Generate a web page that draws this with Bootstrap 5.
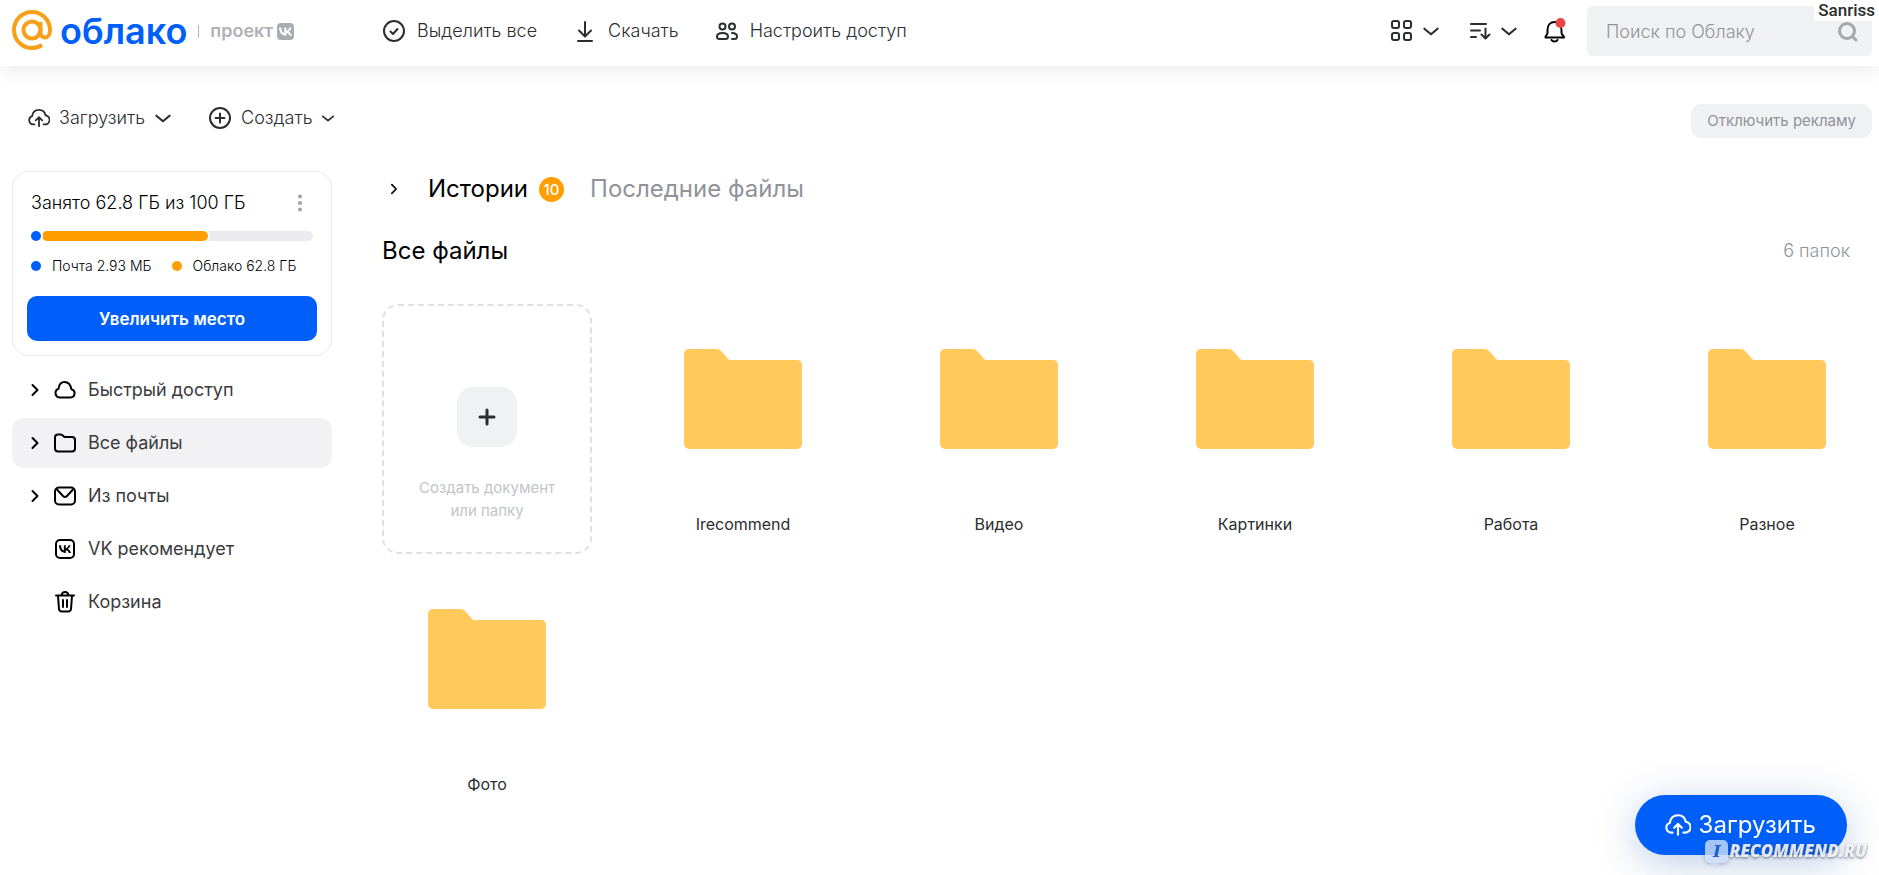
<!DOCTYPE html>
<html lang="ru">
<head>
<meta charset="utf-8">
<meta name="viewport" content="width=device-width, initial-scale=1">
<title>Облако — Все файлы</title>
<link rel="stylesheet" href="https://cdn.jsdelivr.net/npm/bootstrap@5.3.0/dist/css/bootstrap.min.css">
<style>
  :root { --blue: #005ff9; --orange: #ff9e00; --ink: #2c2d2e; --muted: #919399; --soft: #f0f1f3; }
  body { font-family: Inter, "Open Sans", sans-serif; font-size: 18px; line-height: 24px; color: var(--ink); background: #fff; }
  svg { flex: none; display: block; }
  .ico { fill: none; stroke: currentColor; stroke-width: 2; stroke-linecap: round; stroke-linejoin: round; }
  .side-col { width: 382px; flex: none; }

  .topbar { height: 66px; box-shadow: 0 0 20px rgba(0,0,0,.12); padding: 0 7px 4px 0; }
  .wordmark { font-size: 36px; line-height: 40px; font-weight: 600; color: var(--blue); }
  .project { font-weight: 600; color: #b0b2b5; }
  .divider { width: 1px; height: 13px; margin: 0 11px; background: #b0b2b5; }
  .actions { gap: 36px; }
  .tool { background: none; border: 0; padding: 0; gap: 11px; color: inherit; font-weight: 300; display: flex; align-items: center; }
  .view-tools .tool { gap: 8px; }
  .view-tools .bell { margin: 0 18px 0 23px; }
  .search { width: 285px; height: 50px; }
  .search input { background: var(--soft); border: 0; border-radius: 6px; height: 100%; padding: 0 56px 0 19px; font-size: 18px; font-weight: 300; }
  .search input::placeholder { color: var(--muted); opacity: 1; }
  .search-ico { position: absolute; right: 12px; top: 14px; color: #a5a7ab; stroke-width: 3; }
  .user-tag { position: absolute; right: 0; top: 0; padding: 0 4px; background: #fff; font: 500 17px/21px Roboto, sans-serif; z-index: 3; }

  .sub-row { height: 77px; }
  .upload-row { gap: 36px; padding: 0 0 13px 28px; }
  .upload-row .tool { gap: 9px; }
  .ad-row { padding-top: 38px; }
  .ad-btn { background: var(--soft); color: var(--muted); border: 0; border-radius: 10px; height: 34px; font-size: 15px; line-height: 20px; padding: 0 16px; }

  .side-body { padding: 28px 50px 0 12px; }
  .quota { border: 1px solid #e9e9ec; border-radius: 16px; padding: 19px 14px 14px; }
  .quota-text { font-weight: 300; color: #000; }
  .meter { height: 10px; border-radius: 5px; background: #ebebef; }
  .meter span { border-radius: 5px; box-shadow: 0 0 0 2px #fff; }
  .dot { width: 10px; height: 10px; border-radius: 50%; flex: none; }
  .meter .dot { z-index: 1; margin-right: 1px; }
  .legend { margin: 15px 0 20px; gap: 11px; font-size: 14px; line-height: 20px; font-weight: 300; color: #000; }
  .legend .bg-cloud { margin-left: 9px; }
  .bg-mail { background: var(--blue); }
  .bg-cloud { background: var(--orange); }
  .more-btn { background: none; border: 0; color: #a0a2a6; padding: 0 14px; }
  .grow-btn { height: 45px; background: var(--blue); color: #fff; border: 0; border-radius: 10px; font-size: 17px; font-weight: 600; }

  .menu { gap: 3px; padding-top: 9px; }
  .menu-link { height: 50px; border-radius: 12px; padding: 0 16px; gap: 11px; color: #3b3b3d; text-decoration: none; }
  .menu-link.active { background: #f2f2f5; }
  .menu-link svg { color: #000; }
  .no-arrow { padding-left: 41px; }

  .main-col { padding-right: 7px; }
  .heading { font-size: 24px; line-height: 32px; font-weight: 400; }
  .stories { height: 46px; margin-top: 23px; }
  .tab-btn { background: none; border: 0; padding: 0; }
  .story-btn { margin: 0 11px 0 22px; }
  .recent-btn { margin-left: 26px; }
  .count { width: 25px; height: 25px; border-radius: 50%; background: var(--orange); color: #fff; font-size: 15px; line-height: 25px; font-weight: 500; text-align: center; }
  .title-row { height: 78px; margin-bottom: 14px; }
  .gray { color: var(--muted); }
  .total { padding-right: 22px; font-weight: 300; }
  .tiles { display: grid; grid-template-columns: repeat(auto-fill, 210px); justify-content: space-between; column-gap: 40px; row-gap: 10px; }
  .tile { height: 250px; color: var(--ink); text-decoration: none; font-size: 16px; padding-top: 45px; }
  .tile svg { margin-bottom: 63px; }
  .new-tile { height: 250px; background: #fff; border: 2px dashed #dfe0e3; border-radius: 16px; color: #c3c5c9; font-size: 15px; line-height: 23px; padding: 81px 16px 0; }
  .plus-box { width: 60px; height: 60px; border-radius: 16px; background: var(--soft); color: var(--ink); margin-bottom: 29px; }
  .plus-box svg { stroke-width: 3; }

  .fab { position: fixed; right: 32px; bottom: 20px; height: 60px; padding: 0 31px 0 30px; border: 0; border-radius: 30px; background: var(--blue); color: #fff; font-size: 24px; box-shadow: 0 8px 40px rgba(0,60,160,.25); }
  .stamp { position: fixed; right: 12px; bottom: 12px; z-index: 5; gap: 1px; color: rgba(255,255,255,.85); font: italic 800 17px/24px "Open Sans", sans-serif; text-shadow: 0 1px 3px rgba(60,70,90,.75); pointer-events: none; }
  .bubble { position: relative; width: 23px; height: 23px; border-radius: 5px; background: rgba(205,222,250,.8); color: #2160bd; text-align: center; font: italic 700 17px/23px "DejaVu Serif", serif; text-shadow: none; box-shadow: 0 1px 4px rgba(60,70,90,.4); }
  .bubble::after { content: ""; position: absolute; left: 6px; top: 23px; border: 4px solid transparent; border-top-color: rgba(205,222,250,.8); border-left-color: rgba(205,222,250,.8); border-bottom-width: 0; }
</style>
</head>
<body>
<svg width="0" height="0" class="position-absolute" aria-hidden="true">
  <symbol id="upload" viewBox="0 0 24 22"><path d="M7 18H6a4.600 4.600 0 0 1-1.500-9C5 4.500 8 2 12 2s6.500 2.500 7.200 6A5 5 0 0 1 18 18h-1M12 20v-9M8.500 13.500 12 10l3.500 3.500"/></symbol>
  <symbol id="down" viewBox="0 0 16 10"><path d="m2 2.500 6 5 6-5"/></symbol>
  <symbol id="right" viewBox="0 0 10 14"><path d="m2.500 2 5 5-5 5"/></symbol>
  <symbol id="folder" viewBox="0 0 118 100"><path fill="#ffc95c" d="M0 5a5 5 0 0 1 5-5h27c3 0 4 1 5 2l7 8c1 1 2 1 3 1h65a5 5 0 0 1 6 5v79a5 5 0 0 1-5 5H5a5 5 0 0 1-5-5Z"/></symbol>
  <symbol id="vk" viewBox="3 3 18 18"><path d="M12.800 17C7.500 17 4.400 13.300 4.300 7.200h2.600c.1 4.500 2.100 6.400 3.600 6.800V7.200H13v3.900c1.500-.2 3.100-1.900 3.700-3.900h2.500a7.400 7.400 0 0 1-3.400 4.800 7.600 7.600 0 0 1 4 5h-2.700A4.800 4.800 0 0 0 13 13.500V17Z"/></symbol>
</svg>

<header class="topbar d-flex align-items-center position-relative bg-white">
  <div class="side-col d-flex align-items-center ps-2">
    <a href="#" class="d-flex align-items-center text-decoration-none ms-1" aria-label="Облако">
      <svg width="40" height="42" viewBox="0 0 40 42" fill="none" stroke="#f9a01b" stroke-width="4"><circle cx="20" cy="20" r="8.500"/><path d="M28.500 12v10.500c0 3 2 5 4.700 5s4.800-3 4.800-7.500a18 18 0 1 0-18 18c4 0 7-1 10-3"/></svg>
      <span class="wordmark ms-2">облако</span>
    </a>
    <span class="divider"></span>
    <span class="project">проект</span>
    <svg class="ms-1" width="17" height="17"><rect width="17" height="17" rx="4" fill="#a9acb0"/><use href="#vk" x="1" y="1" width="15" height="15" fill="#fff"/></svg>
  </div>
  <nav class="actions d-flex flex-grow-1" aria-label="Действия">
    <button class="tool"><svg class="ico" width="24" height="24"><circle cx="12" cy="12" r="10"/><path d="m8.500 12.500 2.500 2.500 4.500-5"/></svg>Выделить все</button>
    <button class="tool"><svg class="ico" width="24" height="24"><path d="M12 3v14M6 11.500l6 6 6-6M5 22h14"/></svg>Скачать</button>
    <button class="tool"><svg class="ico" width="24" height="24"><circle cx="7.500" cy="7.500" r="3"/><circle cx="17" cy="7.500" r="3"/><path d="M7.500 14C4 14 2 15.500 2 17.500 2 19 3 20 4.500 20h6c1.500 0 2.500-1 2.500-2.500 0-2-2-3.500-5.500-3.500ZM17 14c3.500 0 5 1.500 5 3.500S21 20 19.500 20H17"/></svg>Настроить доступ</button>
  </nav>
  <div class="view-tools d-flex align-items-center">
    <button class="tool" aria-label="Вид"><svg class="ico" width="24" height="24"><rect x="2" y="2" width="7" height="7" rx="2"/><rect x="14" y="2" width="7" height="7" rx="2"/><rect x="2" y="14" width="7" height="7" rx="2"/><rect x="14" y="14" width="7" height="7" rx="2"/></svg><svg class="ico" width="18" height="11"><use href="#down"/></svg></button>
    <button class="tool ms-4" aria-label="Сортировка"><svg class="ico ms-1" width="24" height="24"><path d="M3 5h15M3 11.500h9M3 18h5M17.500 9.500V19M13.500 15.500l4 4 4-4"/></svg><svg class="ico" width="18" height="11"><use href="#down"/></svg></button>
    <button class="tool bell text-black" aria-label="Уведомления"><svg class="ico" width="28" height="28"><path d="M4.500 20.500c-.5-2 2-2 2-5V13c0-5 3-8 7-8s7 3 7 8v2.500c0 3 2.500 3 2.500 5ZM10.500 23c1 2 5 2 6 0"/><circle cx="19.500" cy="6" r="5" fill="#e64646" stroke="none"/></svg></button>
    <form class="search position-relative" role="search"><input class="form-control" type="text" aria-label="Поиск по Облаку" placeholder="Поиск по Облаку"><svg class="search-ico ico" width="24" height="24"><circle cx="11" cy="11" r="7.500"/><path d="m17 17 3 3"/></svg></form>
  </div>
  <span class="user-tag">Sanriss</span>
</header>

<div class="d-flex">
  <aside class="side-col">
    <div class="sub-row upload-row d-flex align-items-end">
      <button class="tool"><svg class="ico" width="22" height="20"><use href="#upload"/></svg>Загрузить<svg class="ico" width="18" height="11"><use href="#down"/></svg></button>
      <button class="tool"><svg class="ico" width="24" height="24"><circle cx="12" cy="12" r="10"/><path d="M12 7.500v9M7.500 12h9"/></svg>Создать<svg class="ico" width="14" height="9"><use href="#down"/></svg></button>
    </div>
    <div class="side-body">
      <section class="quota">
        <div class="d-flex justify-content-between ps-1 mb-3"><span class="quota-text">Занято 62.8 ГБ из 100 ГБ</span><button class="more-btn" aria-label="Ещё"><svg width="6" height="18" fill="currentColor"><circle cx="3" cy="2.500" r="2"/><circle cx="3" cy="9" r="2"/><circle cx="3" cy="15.500" r="2"/></svg></button></div>
        <div class="meter d-flex mx-1"><span class="dot bg-mail"></span><span class="bg-cloud" style="width:59%"></span></div>
        <div class="legend d-flex align-items-center mx-1"><span class="dot bg-mail"></span><span>Почта 2.93 МБ</span><span class="dot bg-cloud"></span><span>Облако 62.8 ГБ</span></div>
        <button class="grow-btn w-100">Увеличить место</button>
      </section>
      <nav class="menu d-grid" aria-label="Разделы">
        <a href="#" class="menu-link d-flex align-items-center"><svg class="ico" width="14" height="14"><use href="#right"/></svg><svg class="ico" width="24" height="24"><path d="M6.500 19.500h11a4.200 4.200 0 0 0 .8-8.300C17.500 6.500 15 4 11.500 4S6 6.500 5.500 10.800a4.500 4.500 0 0 0 1 8.700Z"/></svg>Быстрый доступ</a>
        <a href="#" class="menu-link active d-flex align-items-center" aria-current="page"><svg class="ico" width="14" height="14"><use href="#right"/></svg><svg class="ico" width="24" height="24"><path d="M2 6.500C2 4.500 3 3.500 5 3.500h3c1.500 0 2.500 2.500 4 2.500h7c2 0 3 1 3 3v8.500c0 2-1 3-3 3H5c-2 0-3-1-3-3Z"/></svg>Все файлы</a>
        <a href="#" class="menu-link d-flex align-items-center"><svg class="ico" width="14" height="14"><use href="#right"/></svg><svg class="ico" width="24" height="24"><rect x="2" y="3.500" width="20" height="17" rx="4"/><path d="m4 5.500 6 6.500c1.500 1.500 2.500 1.500 4 0l6-6.500"/></svg>Из почты</a>
        <a href="#" class="menu-link no-arrow d-flex align-items-center"><svg width="24" height="24"><rect x="3" y="3" width="18" height="18" rx="4" fill="none" stroke="#000" stroke-width="2"/><use href="#vk" x="5" y="5" width="14" height="14"/></svg>VK рекомендует</a>
        <a href="#" class="menu-link no-arrow d-flex align-items-center"><svg class="ico" width="24" height="24"><path d="M3 5.500h18M8.500 5C9 2.500 10.500 2 12 2s3 .5 3.500 3M5 6l1 13c.2 2 1 2.500 3 2.500h6c2 0 2.800-.5 3-2.500l1-13M10 10v7M14 10v7"/></svg>Корзина</a>
      </nav>
    </div>
  </aside>

  <main class="main-col flex-grow-1">
    <div class="sub-row ad-row d-flex justify-content-end align-items-start"><button class="ad-btn">Отключить рекламу</button></div>
    <div class="stories d-flex align-items-center">
      <button class="tab-btn" aria-label="Развернуть"><svg class="ico" width="24" height="12"><use href="#right"/></svg></button>
      <button class="tab-btn heading story-btn">Истории</button><span class="count">10</span>
      <button class="tab-btn heading gray recent-btn">Последние файлы</button>
    </div>
    <div class="title-row d-flex justify-content-between align-items-center"><h1 class="heading text-black m-0">Все файлы</h1><span class="gray total">6 папок</span></div>
    <div class="tiles">
      <button class="new-tile d-flex flex-column align-items-center"><span class="plus-box d-flex align-items-center justify-content-center"><svg class="ico" width="20" height="20"><path d="M10 3v14M3 10h14"/></svg></span><span>Создать документ<br>или папку</span></button>
      <a href="#" class="tile d-flex flex-column align-items-center"><svg width="118" height="100"><use href="#folder"/></svg>Irecommend</a>
      <a href="#" class="tile d-flex flex-column align-items-center"><svg width="118" height="100"><use href="#folder"/></svg>Видео</a>
      <a href="#" class="tile d-flex flex-column align-items-center"><svg width="118" height="100"><use href="#folder"/></svg>Картинки</a>
      <a href="#" class="tile d-flex flex-column align-items-center"><svg width="118" height="100"><use href="#folder"/></svg>Работа</a>
      <a href="#" class="tile d-flex flex-column align-items-center"><svg width="118" height="100"><use href="#folder"/></svg>Разное</a>
      <a href="#" class="tile d-flex flex-column align-items-center"><svg width="118" height="100"><use href="#folder"/></svg>Фото</a>
    </div>
  </main>
</div>

<button class="fab d-flex align-items-center gap-2"><svg class="ico" width="26" height="24"><use href="#upload"/></svg>Загрузить</button>
<div class="stamp d-flex align-items-center"><span class="bubble">I</span>RECOMMEND.RU</div>
<script src="https://cdn.jsdelivr.net/npm/bootstrap@5.3.0/dist/js/bootstrap.bundle.min.js"></script>
</body>
</html>
